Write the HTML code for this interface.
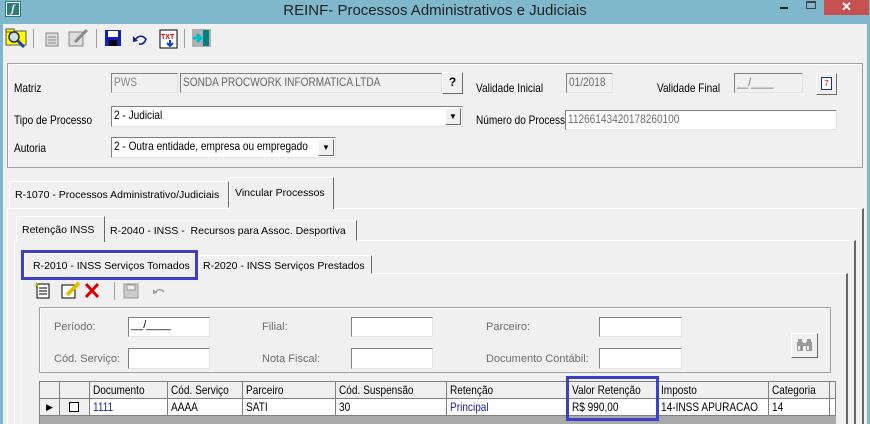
<!DOCTYPE html>
<html><head><meta charset="utf-8"><style>
*{box-sizing:border-box;margin:0;padding:0}
body{width:870px;height:424px;overflow:hidden;background:#7fb8cc;font-family:"Liberation Sans",sans-serif;position:relative}
.a{position:absolute}
.win{left:3px;top:24px;width:864px;height:400px;background:#f0f0f0}
.n{font-size:12px;color:#000;white-space:nowrap}
.c{display:inline-block;transform:scaleX(.84);transform-origin:0 50%;white-space:nowrap}
.lbl{font-size:11px;color:#000}
.g{color:#6d6d6d}
.inp{background:#fff;border-top:1px solid #808080;border-left:1px solid #808080;border-right:1px solid #e3e3e3;border-bottom:1px solid #e3e3e3;padding:1px 2px;white-space:nowrap;overflow:hidden}
.dis{background:#f0f0f0;color:#6d6d6d}
.btn{background:#f0f0f0;border:1px solid;border-color:#fff #696969 #696969 #fff;text-align:center}
.tab{border:1px solid;border-color:#fff #696969 transparent #fff;background:#f0f0f0;font-size:10.5px;padding:0 5px;white-space:nowrap;overflow:hidden}
.cell{border-right:1px solid #808080;border-bottom:1px solid #808080;padding-left:3px;white-space:nowrap;overflow:hidden}
</style></head><body>
<div class="a" style="left:6px;top:2px;width:14px;height:14px;background:#2d7a7a;border:1px solid #fff;outline:1px solid #2d7a7a"><div style="color:#fff;font:italic bold 11px 'Liberation Serif';text-align:center;line-height:12px">ʃ</div></div>
<div class="a" style="left:0;top:0;width:870px;text-align:center;font-size:15px;line-height:22px;color:#1f1f1f">REINF- Processos Administrativos e Judiciais</div>
<div class="a" style="left:780px;top:7px;width:8px;height:2px;background:#222"></div>
<div class="a" style="left:806px;top:1px;width:10px;height:8px;border:1px solid #444;border-top-width:2px"></div>
<div class="a" style="left:824px;top:0;width:45px;height:15px;background:#c75050;color:#fff;text-align:center;font-size:13px;font-weight:bold;line-height:14px">✕</div>
<div class="win a"></div>
<svg class="a" style="left:5px;top:27px" width="210" height="22">
<rect x="1" y="4" width="20" height="14" fill="#ffff00" stroke="#555"/><rect x="1" y="2" width="8" height="3" fill="#ffff00" stroke="#555"/>
<circle cx="9" cy="10" r="5" fill="#cde" stroke="#333" stroke-width="1.5"/><line x1="13" y1="14" x2="19" y2="20" stroke="#1540c0" stroke-width="3"/>
<rect x="28" y="2" width="1" height="19" fill="#a0a0a0"/>
<rect x="41" y="6" width="12" height="13" fill="#ddd" stroke="#888"/><line x1="43" y1="10" x2="51" y2="10" stroke="#888"/><line x1="43" y1="13" x2="51" y2="13" stroke="#888"/><line x1="43" y1="16" x2="51" y2="16" stroke="#888"/>
<rect x="64" y="5" width="14" height="14" fill="#ddd" stroke="#888"/><line x1="70" y1="15" x2="82" y2="3" stroke="#888" stroke-width="3"/>
<rect x="91" y="2" width="1" height="19" fill="#a0a0a0"/>
<rect x="100" y="3" width="16" height="16" fill="#1020c0"/><rect x="103" y="4" width="10" height="6" fill="#fff"/><rect x="104" y="13" width="8" height="6" fill="#000"/>
<path d="M130 13 q5 -7 11 -1 q-2 6 -7 5" fill="none" stroke="#102090" stroke-width="1.6"/><path d="M128 9 l0 6 l5 -1z" fill="#102090"/>
<rect x="155" y="3" width="17" height="18" fill="#fff" stroke="#000"/><text x="156" y="12" font-size="7" fill="#d00" font-weight="bold">TXT</text><path d="M165 13 v5 M162 16 l3 3 l3 -3" stroke="#1040d0" stroke-width="2" fill="none"/>
<rect x="179" y="2" width="1" height="19" fill="#a0a0a0"/>
<rect x="187" y="2" width="19" height="18" fill="#b0b0b0"/><rect x="198" y="3" width="6" height="16" fill="#008080"/><path d="M188 11 h7 M192 7 l4 4 l-4 4" stroke="#00c0d0" stroke-width="3" fill="none"/>
</svg>
<div class="a" style="left:7px;top:63px;width:856px;height:105px;border:1px solid #a0a0a0;box-shadow:inset 1px 1px #fff"></div>
<div class="a n" style="left:14px;top:81px"><span class="c">Matriz</span></div>
<div class="a inp dis n" style="left:111px;top:73px;width:67px;height:20px;color:#888"><span class="c">PWS</span></div>
<div class="a inp dis n" style="left:180px;top:73px;width:262px;height:20px;color:#666"><span class="c">SONDA PROCWORK INFORMATICA LTDA</span></div>
<div class="a btn n" style="left:442px;top:72px;width:21px;height:22px;font-weight:bold;line-height:19px">?</div>
<div class="a n" style="left:476px;top:81px"><span class="c">Validade Inicial</span></div>
<div class="a inp dis n" style="left:566px;top:73px;width:47px;height:20px"><span class="c">01/2018</span></div>
<div class="a n" style="left:657px;top:81px"><span class="c">Validade Final</span></div>
<div class="a inp dis n" style="left:734px;top:73px;width:69px;height:20px"><span class="c">__/____</span></div>
<div class="a btn" style="left:816px;top:73px;width:21px;height:22px"><div style="margin:3px auto;width:11px;height:13px;background:#fff;border:1px solid #1030a0;font-size:8px;color:#c00;line-height:11px">7</div></div>
<div class="a n" style="left:14px;top:113px"><span class="c">Tipo de Processo</span></div>
<div class="a inp n" style="left:111px;top:106px;width:352px;height:21px"><span class="c">2 - Judicial</span></div>
<div class="a btn" style="left:445px;top:108px;width:16px;height:17px;font-size:8px;line-height:15px">▼</div>
<div class="a n" style="left:476px;top:113px"><span class="c">Número do Processo</span></div>
<div class="a inp dis n" style="left:565px;top:110px;width:272px;height:20px;background:#fff"><span class="c">11266143420178260100</span></div>
<div class="a n" style="left:14px;top:141px"><span class="c">Autoria</span></div>
<div class="a inp n" style="left:111px;top:137px;width:225px;height:21px"><span class="c">2 - Outra entidade, empresa ou empregado</span></div>
<div class="a btn" style="left:318px;top:139px;width:16px;height:17px;font-size:8px;line-height:15px">▼</div>
<div class="a" style="left:7px;top:208px;width:857px;height:216px;border-top:1px solid #fff;border-left:1px solid #fff;border-right:2px solid #696969"></div>
<div class="a tab" style="left:9px;top:181px;width:220px;height:27px;line-height:26px">R-1070 - Processos Administrativo/Judiciais</div>
<div class="a tab" style="left:229px;top:177px;width:105px;height:32px;line-height:30px;border-bottom:none">Vincular Processos</div>
<div class="a" style="left:14px;top:240px;width:842px;height:184px;border-top:1px solid #fff;border-left:1px solid #fff;border-right:2px solid #696969"></div>
<div class="a tab" style="left:104px;top:220px;width:253px;height:21px;line-height:20px">R-2040 - INSS -&nbsp; Recursos para Assoc. Desportiva</div>
<div class="a tab" style="left:16px;top:216px;width:89px;height:26px;line-height:26px;border-bottom:none;padding:0 5px">Retenção INSS</div>
<div class="a" style="left:21px;top:273px;width:827px;height:151px;border-top:1px solid #fff;border-left:1px solid #fff;border-right:2px solid #696969"></div>
<div class="a tab" style="left:197px;top:255px;width:175px;height:19px;line-height:20px">R-2020 - INSS Serviços Prestados</div>
<div class="a tab" style="left:24px;top:253px;width:173px;height:22px;line-height:24px;border-bottom:none;padding:0 8px">R-2010 - INSS Serviços Tomados</div>
<div class="a" style="left:21px;top:250px;width:177px;height:30px;border:3px solid #3d3fc4"></div>
<svg class="a" style="left:33px;top:281px" width="140" height="20">
<rect x="4" y="3" width="12" height="14" fill="#fff" stroke="#000"/><line x1="6" y1="7" x2="14" y2="7" stroke="#000"/><line x1="6" y1="10" x2="14" y2="10" stroke="#000"/><line x1="6" y1="13" x2="14" y2="13" stroke="#000"/><text x="0" y="7" font-size="8" fill="#cc0">✳</text>
<rect x="29" y="4" width="13" height="13" fill="#fff" stroke="#000"/><line x1="34" y1="14" x2="46" y2="2" stroke="#e0c000" stroke-width="4"/>
<path d="M53 3 l12 13 M65 3 l-12 13" stroke="#e00000" stroke-width="3"/>
<rect x="81" y="1" width="1" height="18" fill="#a0a0a0"/>
<rect x="91" y="3" width="14" height="14" fill="#ccc" stroke="#999"/><rect x="94" y="4" width="8" height="5" fill="#eee" stroke="#999"/>
<path d="M122 12 q4 -6 9 -1" fill="none" stroke="#999" stroke-width="1.4"/><path d="M120 8 l0 5 l4 -1z" fill="#999"/>
</svg>
<div class="a" style="left:39px;top:307px;width:792px;height:66px;border:1px solid #a0a0a0;box-shadow:inset 1px 1px #fff"></div>
<div class="a lbl g" style="left:54px;top:321px">Período:</div>
<div class="a inp lbl" style="left:128px;top:317px;width:82px;height:20px">__/____</div>
<div class="a lbl g" style="left:262px;top:321px">Filial:</div>
<div class="a inp" style="left:351px;top:317px;width:82px;height:20px"></div>
<div class="a lbl g" style="left:486px;top:321px">Parceiro:</div>
<div class="a inp" style="left:599px;top:317px;width:83px;height:20px"></div>
<div class="a lbl g" style="left:54px;top:353px">Cód. Serviço:</div>
<div class="a inp" style="left:128px;top:348px;width:82px;height:21px"></div>
<div class="a lbl g" style="left:262px;top:353px">Nota Fiscal:</div>
<div class="a inp" style="left:351px;top:348px;width:82px;height:21px"></div>
<div class="a lbl g" style="left:486px;top:353px">Documento Contábil:</div>
<div class="a inp" style="left:599px;top:348px;width:83px;height:21px"></div>
<div class="a btn" style="left:791px;top:333px;width:27px;height:25px">
<svg width="25" height="23"><g fill="#999"><rect x="5" y="8" width="6" height="9"/><rect x="14" y="8" width="6" height="9"/><rect x="6" y="5" width="4" height="4"/><rect x="15" y="5" width="4" height="4"/><rect x="10" y="9" width="5" height="3"/></g><rect x="6" y="12" width="2" height="4" fill="#eee"/><rect x="15" y="12" width="2" height="4" fill="#eee"/></svg></div>
<div class="a" style="left:39px;top:381px;width:797px;height:43px;background:#aaa;border-left:1px solid #808080;border-top:1px solid #808080"></div>
<div class="a n" style="left:40px;top:382px;height:35px;width:796px;font-size:12px">
<div style="display:flex;width:796px;height:17px;background:#f0f0f0;line-height:16px">
<div class="cell" style="width:20px"></div><div class="cell" style="width:30px"></div><div class="cell" style="width:78px"><span class="c">Documento</span></div><div class="cell" style="width:75px"><span class="c">Cód. Serviço</span></div><div class="cell" style="width:93px"><span class="c">Parceiro</span></div><div class="cell" style="width:111px"><span class="c">Cód. Suspensão</span></div><div class="cell" style="width:122px"><span class="c">Retenção</span></div><div class="cell" style="width:89px"><span class="c">Valor Retenção</span></div><div class="cell" style="width:111px"><span class="c">Imposto</span></div><div class="cell" style="width:61px"><span class="c">Categoria</span></div><div class="cell" style="width:6px"></div>
</div>
<div style="display:flex;width:796px;height:17px;background:#fff;line-height:16px">
<div class="cell" style="width:20px;background:#f0f0f0;font-size:9px;padding-left:6px">▶</div><div class="cell" style="width:30px;background:#f0f0f0"><div style="margin:3px 6px;width:10px;height:10px;border:1px solid #000;background:#fff"></div></div><div class="cell" style="width:78px;color:#1c1ca0"><span class="c">1111</span></div><div class="cell" style="width:75px"><span class="c">AAAA</span></div><div class="cell" style="width:93px"><span class="c">SATI</span></div><div class="cell" style="width:111px"><span class="c">30</span></div><div class="cell" style="width:122px;color:#1c1ca0"><span class="c">Principal</span></div><div class="cell" style="width:89px"><span class="c">R$ 990,00</span></div><div class="cell" style="width:111px"><span class="c">14-INSS APURACAO</span></div><div class="cell" style="width:61px"><span class="c">14</span></div><div class="cell" style="width:6px"></div>
</div></div>
<div class="a" style="left:566px;top:376px;width:93px;height:45px;border:3px solid #3d3fc4"></div>
</body></html>
